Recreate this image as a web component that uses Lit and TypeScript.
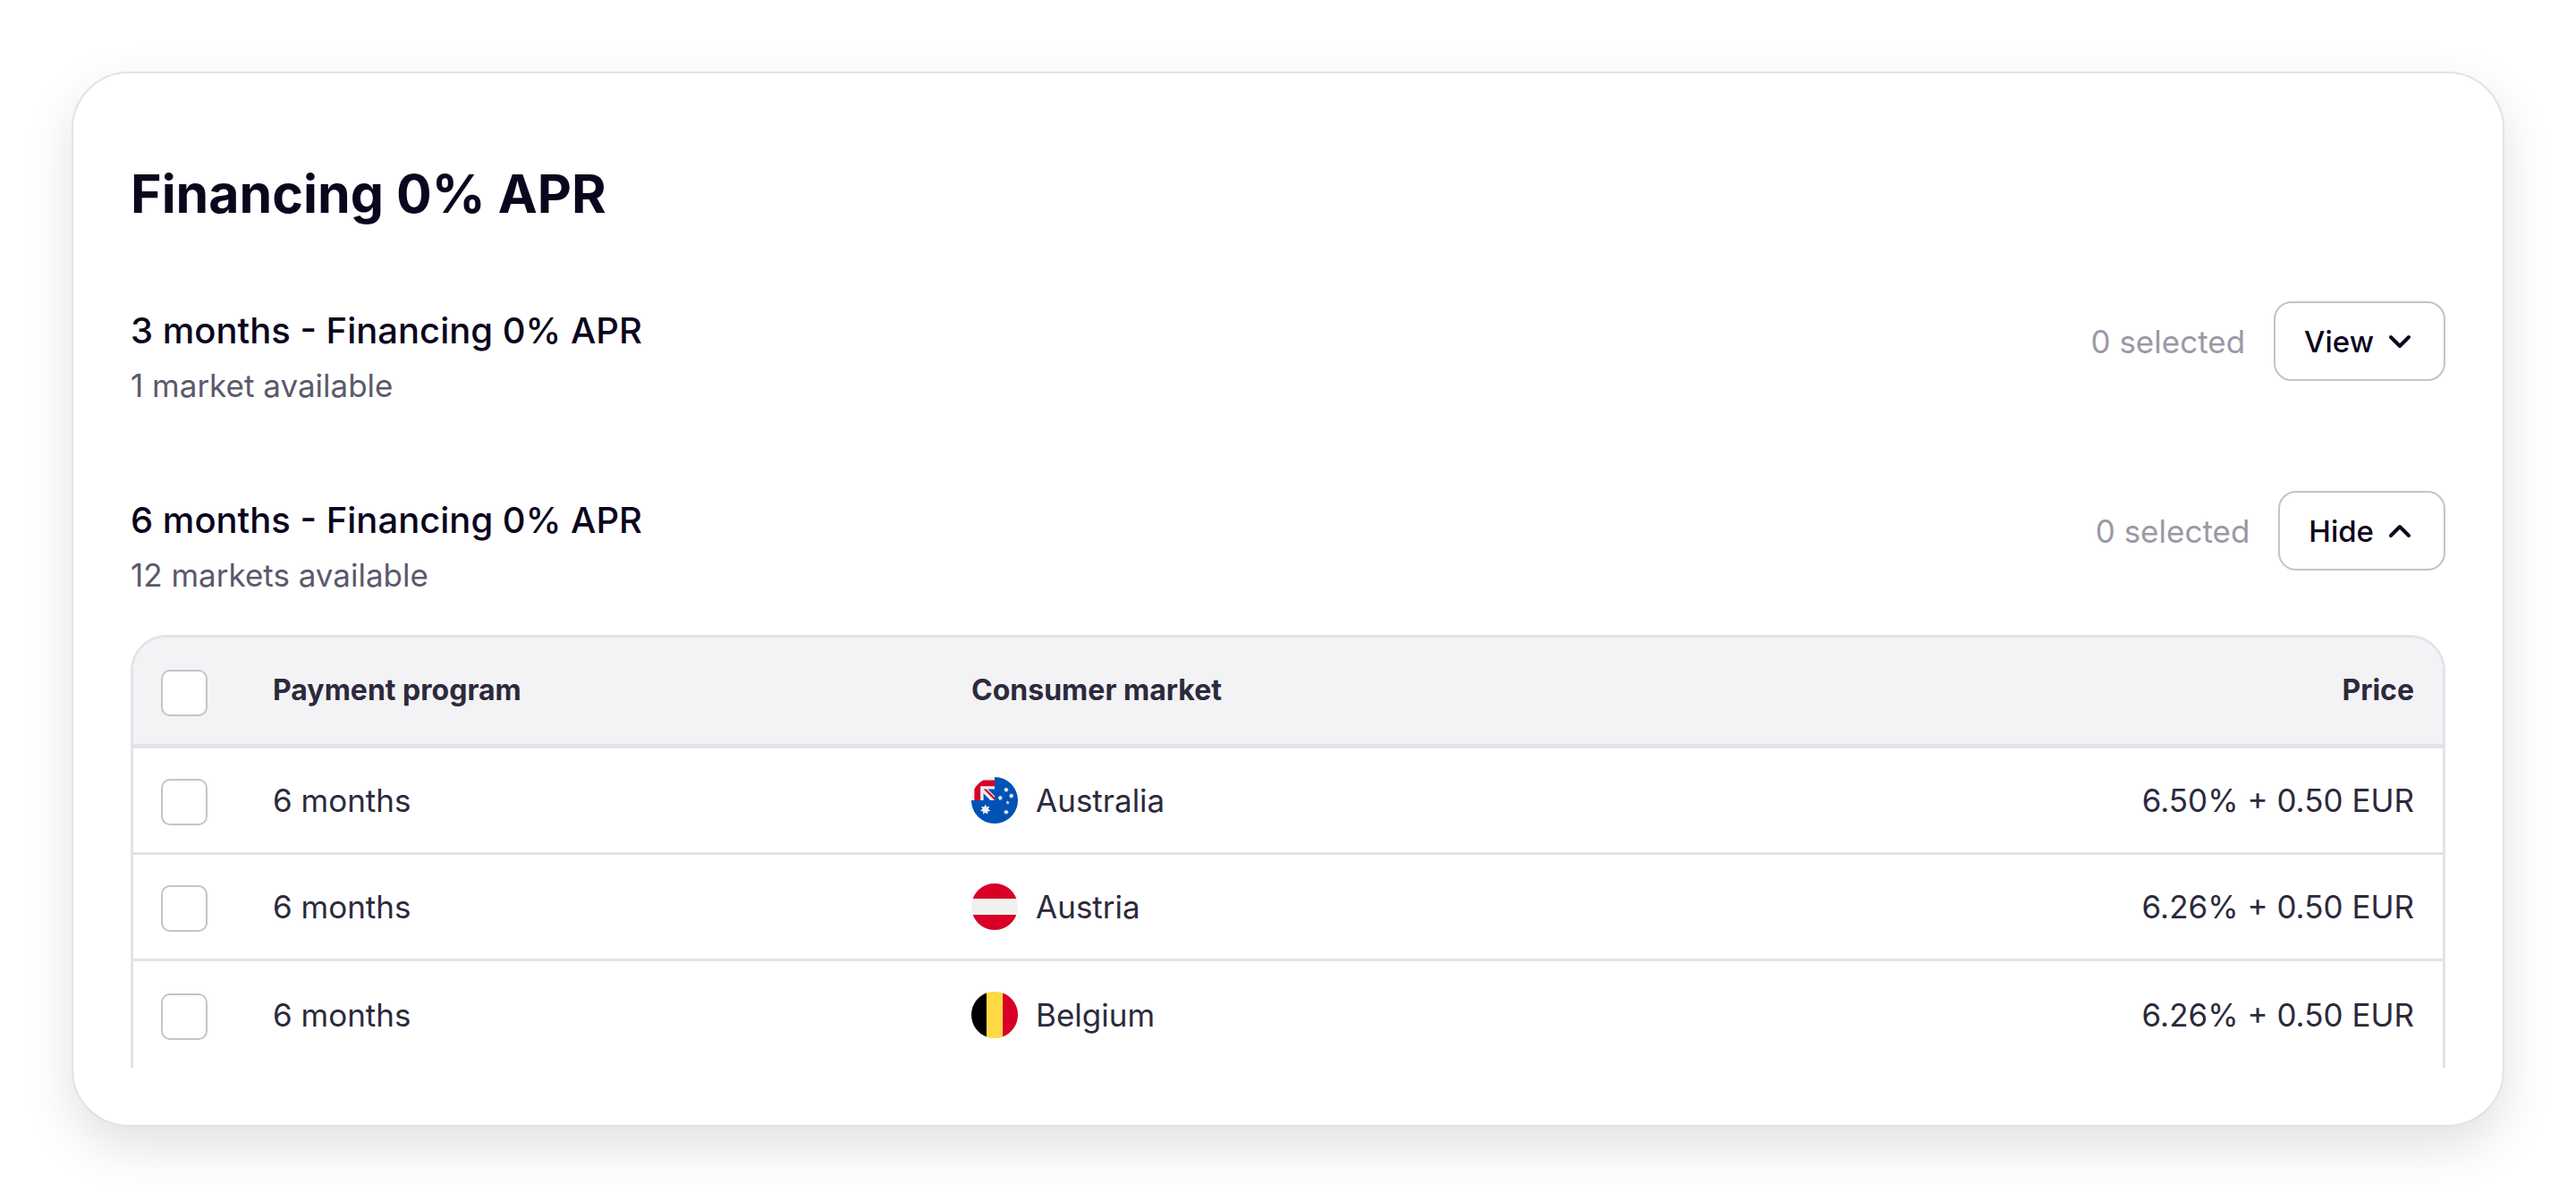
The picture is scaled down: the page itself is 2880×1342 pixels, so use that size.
import { LitElement, html, css, svg, nothing } from "lit";
import { customElement, property, state } from "lit/decorators.js";

type Country = "Australia" | "Austria" | "Belgium";

interface Market {
  country: Country;
  price: string;
}

interface Program {
  term: string;
  summary: string;
  open: boolean;
  markets: Market[];
}

const smallStar =
  "383.284,356.174 390.309,370.863 406.173,367.196 399.068,381.847 411.826,391.964 395.942,395.544 395.986,411.826 383.284,401.639 370.582,411.826 370.626,395.544 354.743,391.964 367.5,381.847 360.396,367.196 376.259,370.863";

const flags = {
  Australia: svg`
    <path fill="#0052b4" d="M256 0C397.4 0 512 114.600 512 256S397.400 512 256 512 0 397.400 0 256H256Z"/>
    <path fill="#f0f0f0" d="M256 0C114.600 0 0 114.600 0 256H256V208.800L180.800 133.600H256Z"/>
    <path fill="#0052b4" d="M133.600 180.800 208.800 256H133.600Z M180.800 133.600H256V208.800Z"/>
    <path fill="#d80027" d="M129.500 33.400C89.500 56.200 56.200 89.500 33.400 129.500V256H100.200V100.200H256V33.400Z"/>
    <path fill="#d80027" d="M256 224.500 165 133.600H133.600L256 256Z"/>
    <polygon fill="#f0f0f0" points="154.395,300.522 168.445,329.9 200.172,322.567 185.964,351.869 211.478,372.102 179.711,379.262 179.8,411.826 154.395,391.453 128.991,411.826 129.08,379.262 97.312,372.102 122.827,351.869 108.617,322.567 140.346,329.9"/>
    <g fill="#f0f0f0">
      <polygon points=${smallStar}/>
      <polygon points=${smallStar} transform="translate(-65 -156)"/>
      <polygon points=${smallStar} transform="translate(0 -245)"/>
      <polygon points=${smallStar} transform="translate(57 -178)"/>
      <polygon points="399.55,256 405.075,273.006 422.957,273.006 408.49,283.517 414.017,300.522 399.55,290.012 385.084,300.522 390.609,283.517 376.143,273.006 394.024,273.006"/>
    </g>`,
  Austria: svg`
    <circle cx="256" cy="256" r="256" fill="#f0f0f0"/>
    <path fill="#d80027" d="M15.900 345C51.200 442.500 145.900 512 256 512S460.800 442.500 496.100 345Z M256 0C145.900 0 51.200 69.500 15.900 167H496.100C460.800 69.500 366.100 0 256 0Z"/>`,
  Belgium: svg`
    <path fill="#000" d="M0 256C0 366.100 69.500 460.800 167 496.100V15.900C69.500 51.200 0 145.900 0 256Z"/>
    <path fill="#d80027" d="M512 256C512 145.900 442.500 51.200 345 15.900V496.100C442.500 460.800 512 366.100 512 256Z"/>
    <path fill="#ffda44" d="M345 15.900C317.300 5.600 287.300 0 256 0S194.700 5.600 167 15.900V496.100C194.700 506.400 224.700 512 256 512S317.300 506.400 345 496.100Z"/>`,
};

@customElement("market-table")
class MarketTable extends LitElement {
  @property({ attribute: false }) term = "";
  @property({ attribute: false }) markets: Market[] = [];

  static styles = css`
    :host {
      display: block;
    }
    .frame {
      border: 3px solid #e3e2e8;
      border-bottom: 0;
      border-radius: 40px 40px 0 0;
      overflow: hidden;
    }
    .table {
      width: 100%;
      border-collapse: separate;
      border-spacing: 0;
      table-layout: fixed;
      color: #2c2a3c;
      font-size: 35px;
      line-height: 52px;
      text-align: left;
    }
    .select-col {
      width: 124px;
    }
    .program-col {
      width: 30.25%;
    }
    .cell {
      box-sizing: border-box;
      height: 119px;
      padding: 0 32px;
      border-bottom: 3px solid #e3e2e8;
      font-weight: 400;
      vertical-align: middle;
    }
    .row:last-child .cell {
      border-bottom: 0;
    }
    .head {
      height: 124px;
      padding-bottom: 2px;
      border-bottom-width: 5px;
      background: #f3f3f5;
      font-size: 32px;
      font-weight: 700;
    }
    .price {
      text-align: right;
    }
    .select {
      padding: 4px 0 0 31px;
    }
    .check {
      appearance: none;
      display: block;
      box-sizing: border-box;
      width: 52px;
      height: 52px;
      margin: 0;
      border: 2px solid #c4c3ca;
      border-radius: 10px;
      background: #fff;
    }
    .check:checked {
      border-color: #0b051d;
      background: #0b051d;
    }
    .market {
      display: flex;
      align-items: center;
      gap: 20px;
    }
    .flag {
      flex: none;
      width: 52px;
      height: 52px;
    }
  `;

  private toggleAll(event: Event) {
    const { checked } = event.target as HTMLInputElement;
    this.renderRoot
      .querySelectorAll<HTMLInputElement>(".row .check")
      .forEach((box) => (box.checked = checked));
    this.report();
  }

  private report() {
    const count = this.renderRoot.querySelectorAll(".row .check:checked").length;
    this.dispatchEvent(new CustomEvent("selection", { detail: count }));
  }

  render() {
    return html`
      <div class="frame">
        <table class="table">
          <colgroup>
            <col class="select-col" />
            <col class="program-col" />
            <col />
            <col />
          </colgroup>
          <thead>
            <tr>
              <th class="cell head select" scope="col">
                <input class="check" type="checkbox" aria-label="Select all markets" @change=${this.toggleAll} />
              </th>
              <th class="cell head" scope="col">Payment program</th>
              <th class="cell head" scope="col">Consumer market</th>
              <th class="cell head price" scope="col">Price</th>
            </tr>
          </thead>
          <tbody>
            ${this.markets.map(
              (m) => html`
                <tr class="row">
                  <td class="cell select">
                    <input class="check" type="checkbox" aria-label="Select ${m.country}" @change=${this.report} />
                  </td>
                  <td class="cell">${this.term}</td>
                  <td class="cell">
                    <div class="market">
                      <svg class="flag" viewBox="0 0 512 512" aria-hidden="true">${flags[m.country]}</svg>
                      <span>${m.country}</span>
                    </div>
                  </td>
                  <td class="cell price">${m.price}</td>
                </tr>
              `
            )}
          </tbody>
        </table>
      </div>
    `;
  }
}

@customElement("program-section")
class ProgramSection extends LitElement {
  @property({ attribute: false }) program!: Program;
  @state() private open = false;
  @state() private selected = 0;

  static styles = css`
    :host {
      display: block;
    }
    .header {
      display: flex;
      justify-content: space-between;
      align-items: flex-start;
    }
    .labels {
      padding-top: 3px;
    }
    .name {
      margin: 0;
      color: #0b051d;
      font-size: 40px;
      font-weight: 500;
      line-height: 60px;
    }
    .summary {
      margin: 0;
      color: #5b596a;
      font-size: 35px;
      line-height: 62px;
    }
    .actions {
      display: flex;
      align-items: center;
      gap: 32px;
    }
    .count {
      color: #9a99a5;
      font-size: 35px;
      line-height: 52px;
    }
    .toggle {
      display: flex;
      align-items: center;
      gap: 16px;
      height: 89px;
      padding: 0 36px 0 32px;
      border: 2px solid #c4c3ca;
      border-radius: 20px;
      background: #fff;
      color: #0b051d;
      font-family: inherit;
      font-size: 33px;
      font-weight: 500;
      line-height: 52px;
      cursor: pointer;
    }
    .chevron {
      width: 26px;
      height: 18px;
      fill: none;
      stroke: currentColor;
      stroke-width: 4;
      stroke-linecap: round;
      stroke-linejoin: round;
    }
    .body {
      display: block;
      margin-top: 36px;
    }
  `;

  connectedCallback() {
    super.connectedCallback();
    this.open = this.program.open;
  }

  render() {
    const { term, summary, markets } = this.program;
    return html`
      <div class="header">
        <div class="labels">
          <h2 class="name">${term} - Financing 0% APR</h2>
          <p class="summary">${summary}</p>
        </div>
        <div class="actions">
          <span class="count">${this.selected} selected</span>
          <button
            class="toggle"
            type="button"
            aria-expanded=${this.open ? "true" : "false"}
            @click=${() => (this.open = !this.open)}
          >
            <span>${this.open ? "Hide" : "View"}</span>
            <svg class="chevron" viewBox="0 0 26 18" aria-hidden="true">
              <path d=${this.open ? "M3 14 13 4 23 14" : "M3 4 13 14 23 4"} />
            </svg>
          </button>
        </div>
      </div>
      ${this.open
        ? html`<market-table
            class="body"
            .term=${term}
            .markets=${markets}
            @selection=${(e: CustomEvent<number>) => (this.selected = e.detail)}
          ></market-table>`
        : nothing}
    `;
  }
}

@customElement("app-root")
class AppRoot extends LitElement {
  private programs: Program[] = [
    {
      term: "3 months",
      summary: "1 market available",
      open: false,
      markets: [{ country: "Austria", price: "6.26% + 0.50 EUR" }],
    },
    {
      term: "6 months",
      summary: "12 markets available",
      open: true,
      markets: [
        { country: "Australia", price: "6.50% + 0.50 EUR" },
        { country: "Austria", price: "6.26% + 0.50 EUR" },
        { country: "Belgium", price: "6.26% + 0.50 EUR" },
      ],
    },
  ];

  static styles = css`
    :host {
      display: block;
      padding: 80px;
      background: #fff;
      font-family: Inter, "Liberation Sans", sans-serif;
    }
    .card {
      padding: 100px 64px 64px;
      border: 2px solid #e3e2e8;
      border-radius: 64px;
      background: #fff;
      box-shadow: 0 22px 56px rgba(0, 0, 0, 0.12);
    }
    .title {
      margin: 0 0 85px;
      color: #0b051d;
      font-size: 59px;
      font-weight: 700;
      line-height: 70px;
    }
    .sections {
      display: flex;
      flex-direction: column;
      gap: 87px;
    }
  `;

  render() {
    return html`
      <main class="card">
        <h1 class="title">Financing 0% APR</h1>
        <div class="sections">
          ${this.programs.map((p) => html`<program-section .program=${p}></program-section>`)}
        </div>
      </main>
    `;
  }
}
